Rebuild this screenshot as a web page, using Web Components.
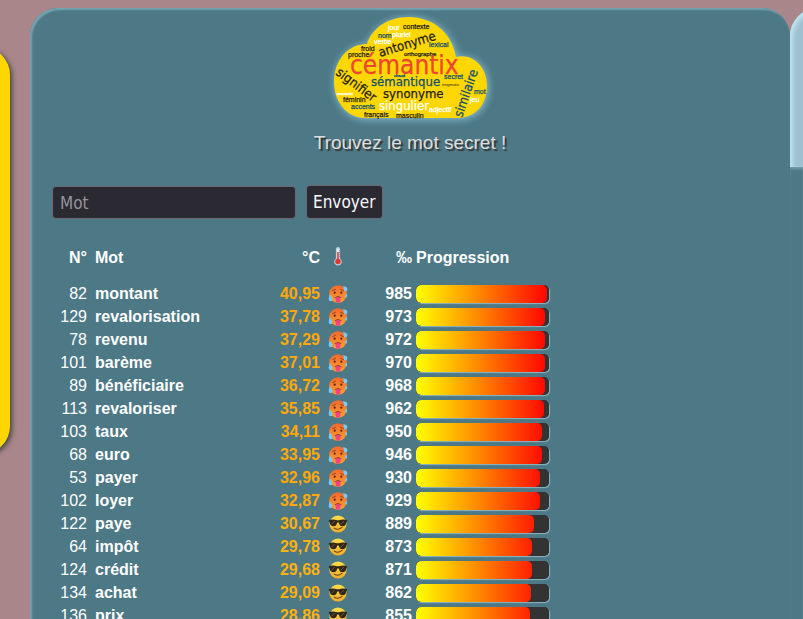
<!DOCTYPE html>
<html lang="fr">
<head>
<meta charset="utf-8">
<title>Cémantix</title>
<style>
html { scrollbar-width: none; }
body { margin: 0; background: #a88689; color: #fff; font: 16px/19px "Liberation Sans", Arial, sans-serif; }
</style>
</head>
<body>
<cx-page>
  <cx-drawer slot="left"></cx-drawer>
  <cx-panel>
    <cx-logo></cx-logo>
    <cx-tagline>Trouvez le mot secret !</cx-tagline>
    <cx-form></cx-form>
    <cx-guesses></cx-guesses>
  </cx-panel>
  <cx-tab slot="right"></cx-tab>
</cx-page>
<script>
const define = (name, html, setup) => customElements.define(name, class extends HTMLElement {
  constructor() {
    super();
    const t = document.createElement('template');
    t.innerHTML = html;
    this.attachShadow({ mode: 'open' }).append(t.content.cloneNode(true));
    if (setup) setup(this.shadowRoot);
  }
});

define('cx-page', `
<style>
:host { display: flex; min-height: 100vh; box-sizing: border-box; padding-top: 8px; overflow: hidden; }
.left { flex: none; width: 30px; }
main { flex: 1; min-width: 0; display: flex; }
.right { flex: none; width: 13px; display: flex; flex-direction: column; }
.fill { flex: 1; background: #4d7885; box-shadow: inset 0 3px 3px -1px #74a0ae; }
</style>
<div class="left"><slot name="left"></slot></div>
<main><slot></slot></main>
<div class="right"><slot name="right"></slot><div class="fill"></div></div>`);

define('cx-drawer', `
<style>
:host { display: block; width: 60px; height: 407px; margin: 39px 0 0 -50px; background: #ffd700; border-radius: 28px; box-shadow: 2px 2px 5px #444; }
</style>`);

define('cx-tab', `
<style>
:host { display: block; width: 60px; height: 159px; background: #9fc1cf; border-radius: 28px 0 0 0; box-shadow: inset 3px 2px 4px #bfe5ef; }
</style>`);

define('cx-panel', `
<style>
:host { flex: 1; min-width: 0; display: flex; flex-direction: column; box-sizing: border-box; padding: 2px 22px 20px; background: #4d7885; border-radius: 28px 28px 0 0; box-shadow: inset 2px 2px 2px #74a5b3; }
</style>
<slot></slot>`);

define('cx-tagline', `
<style>
:host { display: block; text-align: center; margin-top: 6px; font-size: 19px; line-height: 24px; color: #ddd; text-shadow: 2px 2px 1px #333; }
</style>
<slot></slot>`);

define('cx-form', `
<style>
:host { display: block; margin-top: 30px; }
form { display: flex; align-items: flex-end; gap: 10px; margin: 0; }
input, button { box-sizing: border-box; margin: 0; background: #2b2a33; color: #fbfbfe; border: 1px solid #6a6872; border-radius: 4px; font: 17px/24px "DejaVu Sans Condensed", "DejaVu Sans", sans-serif; font-stretch: condensed; }
input { width: 244px; height: 33px; padding: 0 7px; }
input::placeholder { color: #94949a; opacity: 1; }
button { height: 34px; padding: 0 6px; }
</style>
<form onsubmit="return false">
  <input type="text" placeholder="Mot" aria-label="Mot">
  <button type="submit">Envoyer</button>
</form>`);

define('cx-hot', `
<style>:host { display: block; } svg { display: block; }</style>
<svg width="20" height="20" viewBox="0 0 20 20" role="img" aria-label="Brûlant">
  <defs><linearGradient id="g" x2="0" y2="1"><stop stop-color="#f4682c"/><stop offset="1" stop-color="#ffa02e"/></linearGradient></defs>
  <circle cx="10" cy="10" r="8.8" fill="url(#g)"/>
  <path d="M4.6 6.6 7.4 5.4M12.6 5.4l2.8 1.2" stroke="#8a3a1a" stroke-width=".9" stroke-linecap="round"/>
  <circle cx="6.7" cy="8.7" r="1.1" fill="#5b2413"/><circle cx="13.3" cy="8.7" r="1.1" fill="#5b2413"/>
  <path d="M6.2 13.8Q10 10.6 13.8 13.8Z" fill="#65221a"/>
  <path d="M7.6 13.5Q10 12.7 12.4 13.5V16.4A2.4 2.4 0 0 1 7.6 16.4Z" fill="#f54589"/>
  <path d="M10 13.8v2.6" stroke="#d93a74" stroke-width=".5"/>
  <path d="M1.6 10C2.4 11.6 4.8 13 4.5 15.5C4.2 17.8 1 17.7.7 15.3C.4 13.4 1.8 12.2 1.6 10Z" fill="#79c9f7"/>
  <path d="M14.8 2.3C16.7 2.7 19.1 2.3 19.4 5C19.5 7.8 16.7 8.3 16 6.2C15.6 5 15.9 3.7 14.8 2.3Z" fill="#79c9f7"/>
  <path d="M18.2 9.6C19 11 19.8 12.2 18.8 13.2C17.5 14 16.7 12.7 17.2 11.6Z" fill="#79c9f7"/>
</svg>`);

define('cx-cool', `
<style>:host { display: block; } svg { display: block; }</style>
<svg width="20" height="20" viewBox="0 0 20 20" role="img" aria-label="Chaud">
  <defs><linearGradient id="g" x2="0" y2="1"><stop stop-color="#ffdf4c"/><stop offset="1" stop-color="#f3ad25"/></linearGradient></defs>
  <circle cx="10" cy="10" r="8.6" fill="url(#g)"/>
  <path d="M.9 6.1Q5 5 9 6.3H11Q15 5 19.1 6.1V7.4L18.3 8Q18 12.3 14.5 12.3Q11.6 12.2 10.8 8.4H9.2Q8.4 12.2 5.5 12.3Q2 12.3 1.7 8L.9 7.4Z" fill="#302718"/>
  <path d="M3.5 10.3 6.8 6.9M12.7 10.3 16 6.9" stroke="#786039" stroke-width=".9"/>
  <path d="M6.2 14.1Q10 16.6 14 13.4" fill="none" stroke="#67401c" stroke-width="1.1" stroke-linecap="round"/>
</svg>`);

define('cx-thermometer', `
<style>:host { display: block; } svg { display: block; }</style>
<svg width="20" height="20" viewBox="0 0 20 20" role="img" aria-label="Température">
  <path d="M7.9 3.1A2.1 2.1 0 0 1 12.1 3.1V12.5A3.8 3.8 0 1 1 7.9 12.5Z" fill="#b9d1da"/>
  <path d="M9 3V13H11V3Z" fill="#e8eef0"/>
  <path d="M9.2 6H10.8V13H9.2Z" fill="#e33736"/>
  <circle cx="10" cy="15.5" r="2.7" fill="#e33736"/>
  <path d="M11 4.5h1M11 6.5h1M11 8.5h1M11 10.5h1" stroke="#687c84" stroke-width=".6"/>
</svg>`);

define('cx-guesses', `
<style>
:host { display: block; margin-top: 27px; }
table { width: 497px; table-layout: fixed; border-collapse: collapse; }
th, td { padding: 0 4px; line-height: 23px; height: 23px; text-align: left; white-space: nowrap; }
thead th { vertical-align: top; padding-bottom: 13px; }
.n, .t, .p { text-align: right; }
.w, .t, .p { font-weight: bold; }
thead .e, tbody .e { padding-right: 0; }
tbody .t { color: #ffa908; }
tbody .cool { color: #ffb10c; }
thead .b, tbody .b { padding: 0; }
progress { appearance: none; -webkit-appearance: none; display: block; width: 133px; height: 18px; border: 0; border-radius: 5px; background: #333; overflow: hidden; }
.bar { display: block; width: 133px; border-radius: 5px; box-shadow: 1px 1px 1px #8fb4c0; }
progress::-webkit-progress-bar { background: #333; border-radius: 5px; }
progress::-webkit-progress-value { border-radius: 5px; background: linear-gradient(90deg, #ff0, #f00) 0 0 / 133px 100% no-repeat; }
</style>
<table>
  <colgroup><col style="width:39px"><col style="width:175px"><col style="width:58px"><col style="width:28px"><col style="width:64px"><col style="width:133px"></colgroup>
  <thead><tr><th class="n">N°</th><th class="w">Mot</th><th class="t">°C</th><th class="e"><cx-thermometer></cx-thermometer></th><th class="p">‰</th><th class="b">Progression</th></tr></thead>
  <tbody></tbody>
</table>`, root => {
  const rows = [
    [82, 'montant', '40,95', 985], [129, 'revalorisation', '37,78', 973], [78, 'revenu', '37,29', 972],
    [101, 'barème', '37,01', 970], [89, 'bénéficiaire', '36,72', 968], [113, 'revaloriser', '35,85', 962],
    [103, 'taux', '34,11', 950], [68, 'euro', '33,95', 946], [53, 'payer', '32,96', 930],
    [102, 'loyer', '32,87', 929], [122, 'paye', '30,67', 889], [64, 'impôt', '29,78', 873],
    [124, 'crédit', '29,68', 871], [134, 'achat', '29,09', 862], [136, 'prix', '28,86', 855]
  ];
  root.querySelector('tbody').innerHTML = rows.map(([n, w, t, p]) => {
    const kind = p > 900 ? 'hot' : 'cool';
    return `<tr><td class="n">${n}</td><td class="w">${w}</td><td class="t ${kind}">${t}</td><td class="e"><cx-${kind}></cx-${kind}></td><td class="p">${p}</td><td class="b"><span class="bar"><progress max="1000" value="${p}" aria-label="${w}"></progress></span></td></tr>`;
  }).join('');
});

define('cx-logo', `
<style>
:host { display: block; align-self: center; }
svg { display: block; overflow: visible; }
.cloud { fill: #ffd700; filter: drop-shadow(1px 1px 4px #8fc8e0); }
text { font-family: "Liberation Sans", Arial, sans-serif; font-size: 7px; fill: #1d1d1b; stroke: #1d1d1b; stroke-width: .25px; }
.m { font-family: "DejaVu Sans Condensed", "DejaVu Sans", sans-serif; font-stretch: condensed; font-size: 13px; }
.xl { font-size: 26px; fill: #f04432; stroke: #f04432; }
.s { font-size: 6px; }
.xs { font-size: 4px; stroke: none; }
.b { fill: #0d4d73; stroke: #0d4d73; }
.w { fill: #fff; stroke: #fff; }
</style>
<svg width="170" height="115" viewBox="0 0 170 115" role="img" aria-label="cémantix">
  <path class="cloud" d="M42 34C47 18 63 7 84 7C108 7 127 23 131 47C148 43 162 57 162 76C162 95 150 108 132 108H40C23 108 9 93 9 72C9 50 23 34 42 34Z"/>
  <text class="w" x="63" y="20">jour</text>
  <text x="78" y="19">contexte</text>
  <text class="b" x="53" y="28">nom</text>
  <text class="w" x="67" y="27">pluriel</text>
  <text class="w" x="49" y="34">verbe</text>
  <text x="36" y="41">froid</text>
  <text x="23" y="47">proche</text>
  <text class="b" x="104" y="37">lexical</text>
  <text class="s" x="79" y="46">orthographe</text>
  <text class="m" transform="translate(55 47) rotate(-17)">antonyme</text>
  <text class="m xl" x="25" y="64">cémantix</text>
  <text class="xs b" x="69" y="67">chaud</text>
  <text class="b" x="119" y="69">secret</text>
  <text class="m b" x="46" y="76">sémantique</text>
  <text class="xs" x="117" y="76">enigmatix</text>
  <text class="m" transform="translate(10 64) rotate(37)">signifier</text>
  <text class="m" x="58" y="88">synonyme</text>
  <text class="m w" x="54" y="100">singulier</text>
  <text class="m b" transform="translate(137 108) rotate(-71)">similaire</text>
  <text class="b" x="149" y="84">mot</text>
  <text class="w" x="145" y="92">jeu</text>
  <text class="w" x="104" y="102">adjectif</text>
  <text class="xs w" x="12" y="85">cemantix</text>
  <text x="18" y="92">féminin</text>
  <text class="b" x="26" y="99">accents</text>
  <text x="39" y="107">français</text>
  <text x="71" y="108">masculin</text>
</svg>`);
</script>
</body>
</html>
